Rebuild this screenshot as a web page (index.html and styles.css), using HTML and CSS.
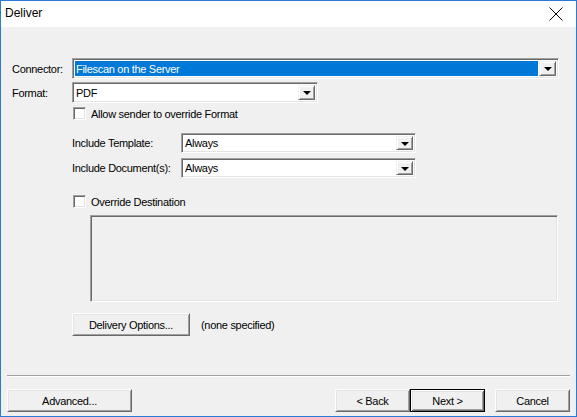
FILE: index.html
```html
<!DOCTYPE html>
<html>
<head>
<meta charset="utf-8">
<link rel="stylesheet" href="styles.css">
</head>
<body>
<div class="window">
  <div class="titlebar">
    <span class="title">Deliver</span>
    <svg class="close" width="14" height="14" viewBox="0 0 14 14"><path d="M0.5 0.5 L13.5 13.5 M13.5 0.5 L0.5 13.5" stroke="#000" stroke-width="1" fill="none"/></svg>
  </div>
  <div class="body">
    <div class="form">
      <div class="row row-connector">
        <span class="lbl">Connector:</span>
        <div class="combo combo-connector">
          <div class="field"><span class="value selected">Filescan on the Server</span></div>
          <div class="dd"><span class="arrow"></span></div>
        </div>
      </div>
      <div class="row row-format">
        <span class="lbl">Format:</span>
        <div class="combo combo-format">
          <div class="field"><span class="value">PDF</span></div>
          <div class="dd"><span class="arrow"></span></div>
        </div>
      </div>
      <div class="check-row check-allow">
        <span class="box"></span><span class="ctext">Allow sender to override Format</span>
      </div>
      <div class="row row-sub row-template">
        <span class="lbl2">Include Template:</span>
        <div class="combo combo-inc">
          <div class="field"><span class="value">Always</span></div>
          <div class="dd"><span class="arrow"></span></div>
        </div>
      </div>
      <div class="row row-sub row-doc">
        <span class="lbl2">Include Document(s):</span>
        <div class="combo combo-inc">
          <div class="field"><span class="value">Always</span></div>
          <div class="dd"><span class="arrow"></span></div>
        </div>
      </div>
      <div class="check-row check-override">
        <span class="box"></span><span class="ctext">Override Destination</span>
      </div>
      <div class="groupbox"></div>
      <div class="opts-row">
        <button class="btn btn-opts">Delivery Options...</button>
        <span class="note">(none specified)</span>
      </div>
    </div>
    <div class="sep"></div>
    <div class="footer">
      <button class="btn btn-adv">Advanced...</button>
      <div class="spacer"></div>
      <button class="btn btn-nav">&lt; Back</button>
      <button class="btn btn-nav btn-default">Next &gt;</button>
      <button class="btn btn-nav btn-cancel">Cancel</button>
    </div>
  </div>
</div>
</body>
</html>
```
FILE: styles.css
```css
html, body {
  margin: 0;
  padding: 0;
  background: #f0f0f0;
}
body {
  font-family: "Liberation Sans", Arial, sans-serif;
  font-size: 11px;
  letter-spacing: -0.3px;
  color: #000;
}
.window {
  width: 577px;
  height: 417px;
  box-sizing: border-box;
  border: 1px solid #2b7bd6;
  display: flex;
  flex-direction: column;
  background: #f0f0f0;
  overflow: hidden;
}
.titlebar {
  height: 26px;
  background: #fff;
  display: flex;
  align-items: center;
  justify-content: space-between;
  padding: 0 13px 0 4px;
  flex: none;
}
.title {
  font-size: 12px;
  letter-spacing: 0;
  color: #000;
  position: relative;
  top: -1px;
}
.close {
  display: block;
}
.body {
  flex: 1;
  display: flex;
  flex-direction: column;
}
.form {
  display: flex;
  flex-direction: column;
  padding-left: 11px;
}
.row {
  display: flex;
  align-items: center;
}
.row-connector { margin-top: 31px; }
.row-format { margin-top: 3px; }
.lbl {
  width: 60px;
  flex: none;
}
.lbl2 {
  width: 109px;
  flex: none;
}
.row-sub { padding-left: 60px; }
.row-template { margin-top: 13px; }
.row-doc { margin-top: 5px; }

.combo {
  display: flex;
  box-sizing: border-box;
  border: 1px solid;
  border-color: #a0a0a0 #fff #fff #a0a0a0;
  box-shadow: inset 1px 1px 0 #696969, inset -1px -1px 0 #e3e3e3;
  background: #fff;
  padding: 2px;
}
.combo-connector { width: 487px; height: 21px; }
.combo-format { width: 246px; height: 21px; }
.combo-inc { width: 235px; height: 20px; }
.field {
  flex: 1;
  display: flex;
  align-items: stretch;
  background: #fff;
}
.value {
  display: flex;
  align-items: center;
  padding-left: 1px;
  flex: 1;
}
.value.selected {
  background: #0078d7;
  color: #fff;
  margin-right: 1px;
}
.dd {
  width: 17px;
  flex: none;
  box-sizing: border-box;
  background: #f0f0f0;
  border: 1px solid;
  border-color: #f0f0f0 #696969 #696969 #f0f0f0;
  box-shadow: inset 1px 1px 0 #fff, inset -1px -1px 0 #a0a0a0;
  display: flex;
  align-items: center;
  justify-content: center;
}
.arrow {
  width: 0;
  height: 0;
  border-left: 4px solid transparent;
  border-right: 4px solid transparent;
  border-top: 4px solid #000;
  margin-top: 1px;
}

.check-row {
  display: flex;
  align-items: center;
  padding-left: 61px;
  height: 13px;
}
.check-allow { margin-top: 4px; }
.check-override { margin-top: 17px; }
.box {
  width: 13px;
  height: 13px;
  box-sizing: border-box;
  border: 1px solid;
  border-color: #a0a0a0 #fff #fff #a0a0a0;
  box-shadow: inset 1px 1px 0 #696969, inset -1px -1px 0 #e3e3e3;
  background: #fff;
  flex: none;
}
.ctext { margin-left: 5px; }

.groupbox {
  margin-top: 7px;
  margin-left: 78px;
  width: 468px;
  height: 87px;
  box-sizing: border-box;
  border: 1px solid;
  border-color: #a0a0a0 #fff #fff #a0a0a0;
  box-shadow: inset 1px 1px 0 #696969, inset -1px -1px 0 #e3e3e3;
  background: #f0f0f0;
}

.opts-row {
  display: flex;
  align-items: center;
  margin-top: 11px;
  padding-left: 60px;
}
.note { margin-left: 11px; }

.btn {
  font-family: "Liberation Sans", Arial, sans-serif;
  font-size: 11px;
  letter-spacing: -0.3px;
  color: #000;
  height: 23px;
  box-sizing: border-box;
  background: #f0f0f0;
  border: 1px solid;
  border-color: #fff #696969 #696969 #fff;
  box-shadow: inset 1px 1px 0 #e3e3e3, inset -1px -1px 0 #a0a0a0;
  padding: 0;
  margin: 0;
  flex: none;
}
.btn-opts { width: 118px; }

.sep {
  margin: 39px 6px 0 6px;
  height: 1px;
  background: #a0a0a0;
  border-bottom: 1px solid #fff;
}

.footer {
  display: flex;
  margin-top: 12px;
  padding: 0 6px;
}
.spacer { flex: 1; }
.btn-adv { width: 125px; }
.btn-nav { width: 75px; }
.btn-default {
  border: 1px solid #000;
  box-shadow: inset 1px 1px 0 #fff, inset -1px -1px 0 #696969, inset 2px 2px 0 #e3e3e3, inset -2px -2px 0 #a0a0a0;
}
.btn-cancel { margin-left: 10px; }
```
